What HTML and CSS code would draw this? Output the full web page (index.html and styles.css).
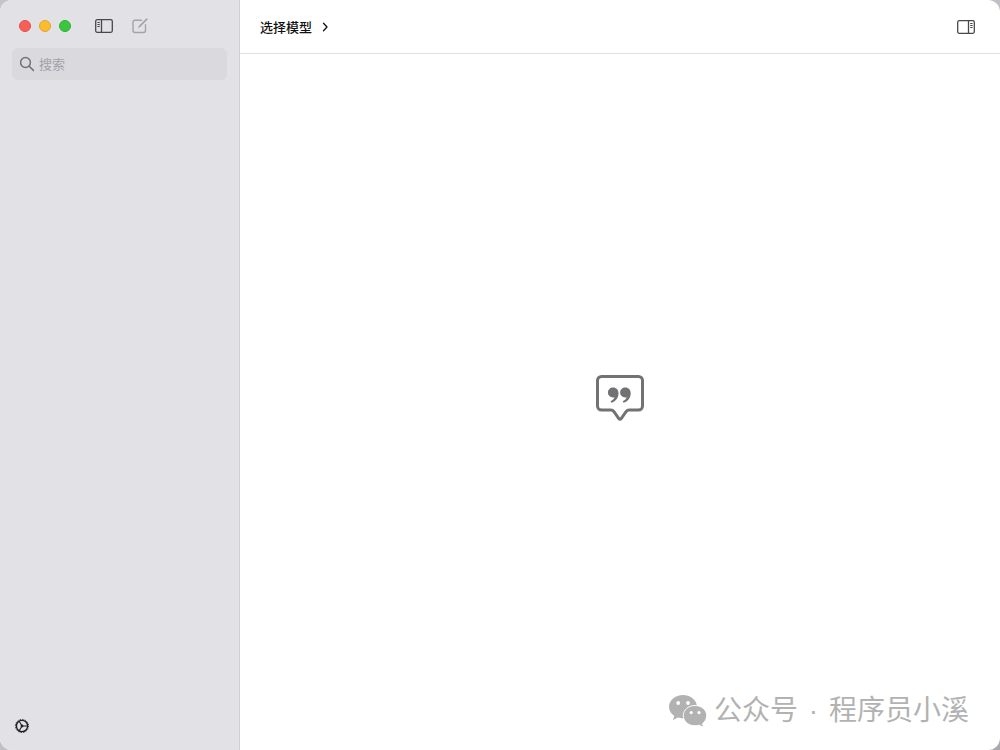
FILE: index.html
```html
<!DOCTYPE html>
<html lang="zh-CN">
<head>
<meta charset="utf-8">
<meta name="viewport" content="width=device-width, initial-scale=1">
<title>选择模型</title>
<link rel="stylesheet" href="styles.css">
</head>
<body>
<div class="window">
  <aside class="sidebar">
    <div class="titlebar">
      <div class="lights">
        <button class="light close" aria-label="关闭"></button>
        <button class="light minimize" aria-label="最小化"></button>
        <button class="light maximize" aria-label="缩放"></button>
      </div>
      <button class="icon-button" aria-label="切换边栏">
        <svg width="20" height="16" viewBox="0 0 20 16" fill="none" stroke="#48484b" stroke-width="1.3"><rect x="1.7" y="1.7" width="16.6" height="12.6" rx="1.5"/><path d="M7.5 1.7v12.6"/><path d="M3.4 4.5h2.4M3.4 6.5h2.4M3.4 8.500h2.4" stroke-width="1"/></svg>
      </button>
      <button class="icon-button compose" aria-label="新对话">
        <svg width="18" height="18" viewBox="0 0 18 18" fill="none" stroke="#a3a3a8" stroke-width="1.4" stroke-linecap="round" stroke-linejoin="round"><path d="M10.500 3.200H4a2 2 0 0 0-2 2v8.300a2 2 0 0 0 2 2h8.500a2 2 0 0 0 2-2V7.800"/><path d="M7.400 10.700l.7-2 7.500-7.400 1 1-7.300 7.500z" fill="#a3a3a8" stroke-width=".3"/></svg>
      </button>
    </div>
    <label class="search">
      <svg width="16" height="16" viewBox="0 0 16 16" fill="none" stroke="#727277" stroke-width="1.5" stroke-linecap="round"><circle cx="6.500" cy="6.500" r="4.900"/><path d="M10.200 10.200l4.200 4.200"/></svg>
      <input type="search" placeholder="搜索" aria-label="搜索">
    </label>
    <button class="icon-button settings" aria-label="设置">
      <svg width="16" height="16" viewBox="0 0 16 16" fill="none" stroke="#1f1f21"><circle cx="8" cy="8" r="5.600" stroke-width="1.400"/><circle cx="8" cy="8" r="6.600" stroke-width="1" stroke-dasharray="1.300 1.292"/><circle cx="8" cy="8" r="1.400" fill="#1f1f21" stroke="none"/><path d="M8 8h5.600M8 8L5.200 3.150M8 8l-2.800 4.850" stroke-width="1.100"/></svg>
    </button>
  </aside>
  <div class="content">
    <header class="toolbar">
      <button class="model">选择模型
        <svg width="8" height="10" viewBox="0 0 8 10" fill="none" stroke="#111" stroke-width="1.300" stroke-linecap="round" stroke-linejoin="round"><path d="M2.500 1.300L6 5 2.500 8.700"/></svg>
      </button>
      <button class="icon-button" aria-label="切换检查器">
        <svg width="20" height="16" viewBox="0 0 20 16" fill="none" stroke="#48484b" stroke-width="1.300"><rect x="1.700" y="1.700" width="16.600" height="12.600" rx="1.500"/><path d="M12.500 1.700v12.600"/><path d="M14.200 4.500h2.400M14.200 6.500h2.400M14.200 8.500h2.400" stroke-width="1"/></svg>
      </button>
    </header>
    <main class="empty">
      <svg width="50" height="48" viewBox="0 0 50 48"><path d="M6.500 2.500h37a4 4 0 0 1 4 4v25.500a4 4 0 0 1-4 4H34c-1.300 0-2 .5-2.800 1.400l-5 7.100q-1.200 1.500-2.400 0l-5-7.100C18 36.500 17.300 36 16 36H6.500a4 4 0 0 1-4-4V6.500a4 4 0 0 1 4-4z" fill="none" stroke="#727275" stroke-width="3"/><g fill="#727275"><path id="quote" d="M18.200 13.500c3.100 0 5.300 2.400 5.300 5.800 0 4.700-2.900 8-6.400 9.200-1.300.4-2-1.100-.8-1.800 1.700-.9 2.800-2.100 3.200-3.500-.5.200-1 .3-1.600.3a5 5 0 0 1-5-5c0-2.900 2.300-5 5.300-5z"/><use href="#quote" x="12.200"/></g></svg>
    </main>
  </div>
</div>
<div class="watermark">
  <svg width="40" height="34" viewBox="0 0 40 34"><path fill="#b2b2b2" d="M15 1C7.300 1 1 6.200 1 12.800c0 3.700 2 7 5.200 9.200L5 26.200l4.800-2.600c1.700.5 3.400.8 5.200.8C22.700 24.400 29 19.200 29 12.800S22.700 1 15 1z"/><path fill="#b2b2b2" stroke="#fff" stroke-width="1" d="M27 11.500c-6.600 0-11.700 4.500-11.700 10.100S20.400 31.800 27 31.800c1.500 0 2.900-.2 4.200-.6l4.400 2.300-1.100-3.800c2.600-1.900 4.200-4.800 4.200-8.100 0-5.600-5.100-10.100-11.700-10.100z"/><g fill="#fff"><circle cx="10.200" cy="9" r="1.900"/><circle cx="20" cy="9" r="1.900"/><circle cx="23.200" cy="18.600" r="1.600"/><circle cx="31" cy="18.600" r="1.600"/></g></svg>
  <span>公众号</span><span class="dot">·</span><span>程序员小溪</span>
</div>
</body>
</html>
```
FILE: styles.css
```css
* { box-sizing: border-box; }
body {
  margin: 0;
  background: linear-gradient(to bottom right, #c4c4ca 40%, #a8a8ae);
  font-family: "Liberation Sans", "Noto Sans CJK SC", sans-serif;
  font-size: 13px;
}
button {
  padding: 0;
  border: 0;
  background: none;
  font: inherit;
  color: inherit;
}
svg { display: block; flex: none; }
.window {
  display: flex;
  height: 100vh;
  overflow: hidden;
  border-radius: 12px;
  background: #fff;
}
.sidebar {
  display: flex;
  flex-direction: column;
  width: 240px;
  flex: none;
  padding: 12px;
  background: #e2e1e6;
  border-right: 1px solid #cfcfd4;
}
.titlebar {
  display: flex;
  align-items: center;
  height: 28px;
  margin-bottom: 8px;
  padding-left: 7px;
}
.lights {
  display: flex;
  gap: 8px;
  margin-right: 23px;
}
.light {
  width: 12px;
  height: 12px;
  border-radius: 50%;
  border: 1px solid;
}
.close { background: #f95f57; border-color: #df5148; }
.minimize { background: #fbbc2f; border-color: #e0a52c; }
.maximize { background: #3ac73f; border-color: #2eb033; }
.compose { margin-left: 17px; }
.search {
  display: flex;
  align-items: center;
  gap: 4px;
  height: 32px;
  padding: 0 7px;
  border-radius: 6px;
  background: #dad9de;
}
.search input {
  flex: 1;
  min-width: 0;
  padding: 0;
  border: 0;
  outline: 0;
  background: none;
  font: inherit;
}
.search input::placeholder { color: #a2a2a9; opacity: 1; }
.settings {
  align-self: flex-start;
  margin: auto 0 4px 2px;
}
.content {
  display: flex;
  flex: 1;
  flex-direction: column;
  min-width: 0;
}
.toolbar {
  display: flex;
  align-items: center;
  justify-content: space-between;
  height: 54px;
  padding: 0 24px 0 20px;
  border-bottom: 1px solid #e0e0e3;
}
.model {
  display: flex;
  align-items: center;
  gap: 9px;
  font-weight: 500;
  color: #111;
}
.empty {
  display: flex;
  flex: 1;
  align-items: center;
  justify-content: center;
  padding-bottom: 8px;
}
.watermark {
  position: absolute;
  right: 31px;
  bottom: 19px;
  display: flex;
  align-items: center;
  height: 40px;
  font-size: 28px;
  line-height: 40px;
  color: #b2b2b2;
}
.watermark svg { margin-right: 6px; }
.dot { width: 31px; text-align: center; }
```
